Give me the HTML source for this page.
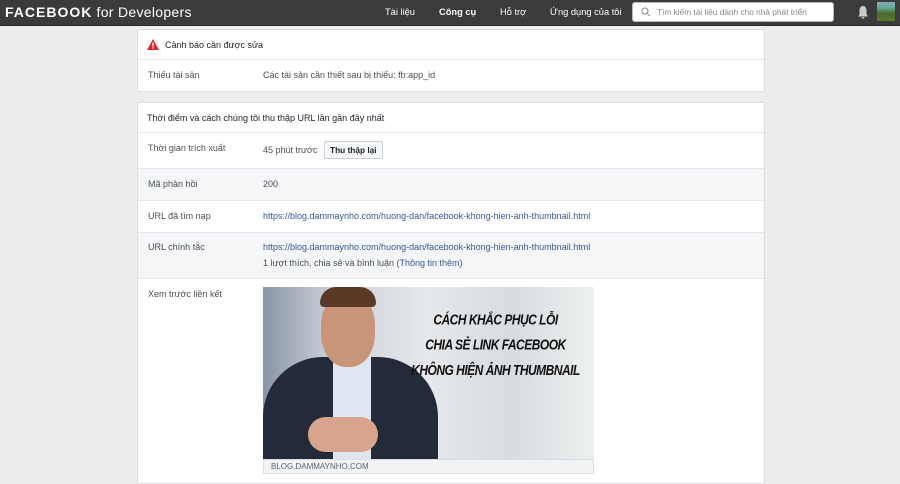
<!DOCTYPE html>
<html><head><meta charset="utf-8"><style>
body{margin:0;width:900px;height:474px;overflow:hidden;background:#ededed;font-family:"Liberation Sans",Arial,sans-serif;font-size:9px;color:#1d2129}
.nav{height:25px;background:#3b3b3b;position:relative;color:#fff;border-bottom:1px solid #2a2a2a}
.logo{position:absolute;left:5px;top:4px;font-size:14px;letter-spacing:.3px}
.logo b{font-weight:bold;letter-spacing:1px}
.nl{position:absolute;top:7px;font-size:9.3px}
.search{position:absolute;left:632px;top:2px;width:200px;height:18px;background:#fff;border-radius:3px;border:1px solid #bbb;color:#888;font-size:8.3px;line-height:18px}
.card{position:absolute;left:137px;width:626px;background:#fff;border:1px solid #dddfe2}
.row{position:relative;border-top:1px solid #e5e6e9}
.l{position:absolute;left:10px;color:#4b4f56}
.v{position:absolute;left:125px;color:#4b4f56}
a{color:#365899;text-decoration:none}
.g{background:#f5f6f7}
</style></head><body>
<div class="nav">
<div class="logo"><b>FACEBOOK</b> for Developers</div>
<div class="nl" style="left:385px">Tài liệu</div>
<div class="nl" style="left:439px;font-weight:bold">Công cụ</div>
<div class="nl" style="left:500px">Hỗ trợ</div>
<div class="nl" style="left:550px">Ứng dụng của tôi</div>
<div class="search"><svg width="10" height="10" style="position:absolute;left:8px;top:4px" viewBox="0 0 10 10"><circle cx="4" cy="4" r="3" fill="none" stroke="#888" stroke-width="1"/><path d="M6.2 6.2L9 9" stroke="#888"/></svg><span style="position:absolute;left:24px">Tìm kiếm tài liệu dành cho nhà phát triển</span></div>
<svg width="12" height="13" style="position:absolute;left:857px;top:6px" viewBox="0 0 12 13"><path d="M6 0C3 0 2.5 3 2.5 5L2.5 8.5 1 10.5H11L9.5 8.5 9.5 5C9.5 3 9 0 6 0ZM4.5 11.3H7.5A1.5 1.5 0 0 1 4.5 11.3Z" fill="#ccc"/></svg>
<div style="position:absolute;left:877px;top:2px;width:18px;height:19px;background:linear-gradient(#8ab 0,#6a9 30%,#4a6a2a 60%,#5a7a2a)"></div>
</div>

<div class="card" style="top:29px;height:61px">
<div style="height:29px;position:relative"><svg width="12" height="11" style="position:absolute;left:9px;top:9px" viewBox="0 0 12 11"><path d="M6 0L12 11H0Z" fill="#e0242d"/><rect x="5.3" y="3.5" width="1.4" height="4" fill="#fff"/><rect x="5.3" y="8.3" width="1.4" height="1.4" fill="#fff"/></svg><span style="position:absolute;left:27px;top:10px;color:#1d2129">Cảnh báo cần được sửa</span></div>
<div class="row" style="height:31px"><span class="l" style="top:10px">Thiếu tài sản</span><span class="v" style="top:10px">Các tài sản cần thiết sau bị thiếu: fb:app_id</span></div>
</div>

<div class="card" style="top:102px;height:380px">
<div style="height:29px;position:relative"><span style="position:absolute;left:9px;top:10px">Thời điểm và cách chúng tôi thu thập URL lần gần đây nhất</span></div>
<div class="row" style="height:35px"><span class="l" style="top:10px">Thời gian trích xuất</span><span class="v" style="top:12px">45 phút trước</span><span style="position:absolute;left:186px;top:8px;border:1px solid #ccd0d5;background:#f6f7f9;padding:3px 5px;font-size:8.3px;font-weight:bold;border-radius:2px">Thu thập lại</span></div>
<div class="row g" style="height:31px"><span class="l" style="top:10px">Mã phản hồi</span><span class="v" style="top:10px">200</span></div>
<div class="row" style="height:31px"><span class="l" style="top:10px">URL đã tìm nạp</span><span class="v" style="top:10px"><a>https://blog.dammaynho.com/huong-dan/facebook-khong-hien-anh-thumbnail.html</a></span></div>
<div class="row g" style="height:45px"><span class="l" style="top:9px">URL chính tắc</span><span class="v" style="top:9px"><a>https://blog.dammaynho.com/huong-dan/facebook-khong-hien-anh-thumbnail.html</a></span><span class="v" style="top:25px">1 lượt thích, chia sẻ và bình luận (<a>Thông tin thêm</a>)</span></div>
<div class="row" style="height:200px"><span class="l" style="top:10px">Xem trước liên kết</span>
<div style="position:absolute;left:125px;top:8px;width:331px;height:172px;overflow:hidden;background:linear-gradient(90deg,#8a96a4 0,#c9cfd6 20%,#e6e8ea 50%,#d8dcdf 75%,#eef0f0 100%)">
<div style="position:absolute;left:0;top:70px;width:175px;height:110px;background:#232a3a;border-radius:60px 60px 0 0"></div>
<div style="position:absolute;left:70px;top:70px;width:38px;height:102px;background:#dfe6ef"></div>
<div style="position:absolute;left:58px;top:5px;width:54px;height:75px;background:#c99578;border-radius:45%"></div>
<div style="position:absolute;left:57px;top:0;width:56px;height:20px;background:#5a3a26;border-radius:20px 20px 5px 5px"></div>
<div style="position:absolute;left:45px;top:130px;width:70px;height:35px;background:#d7a48c;border-radius:30px"></div>
<div style="position:absolute;left:140px;top:27px;width:185px;text-align:center;font-weight:bold;font-style:italic;font-size:12px;line-height:21px;color:#111;letter-spacing:-.5px;white-space:nowrap;transform:scaleY(1.2)">CÁCH KHẮC PHỤC LỖI<br>CHIA SẺ LINK FACEBOOK<br>KHÔNG HIỆN ẢNH THUMBNAIL</div>
</div>
<div style="position:absolute;left:125px;top:180px;width:331px;height:15px;background:#f2f3f5;border:1px solid #dadde1;box-sizing:border-box;font-size:8px;color:#606770;padding:2px 7px">BLOG.DAMMAYNHO.COM</div>
</div>
</div>
</body></html>
